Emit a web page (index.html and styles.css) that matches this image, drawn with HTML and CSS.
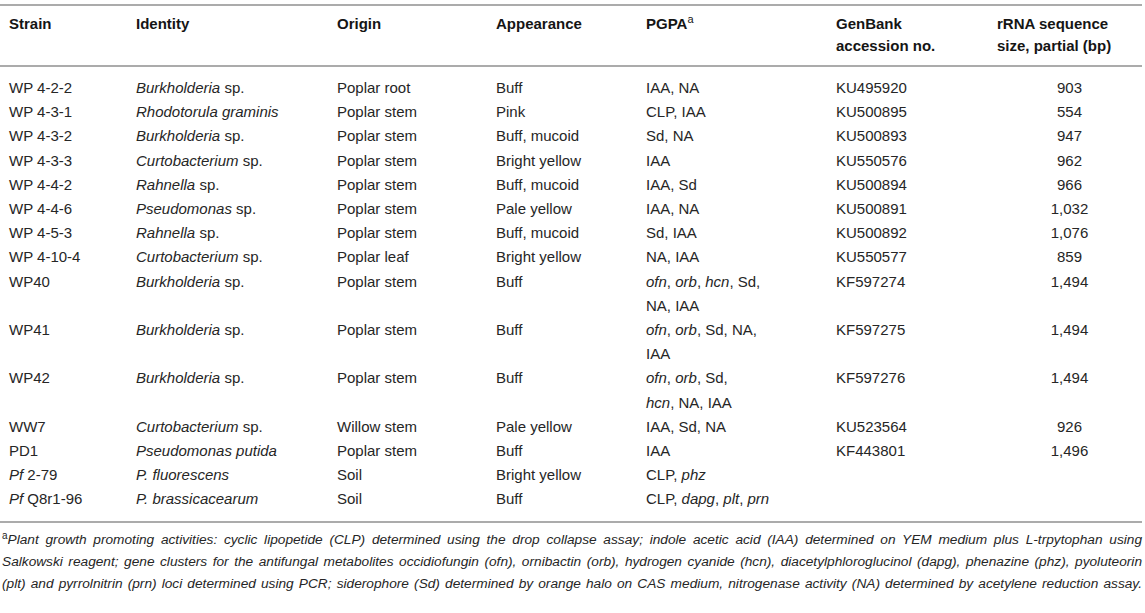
FILE: index.html
```html
<!DOCTYPE html>
<html>
<head>
<meta charset="utf-8">
<link rel="stylesheet" href="styles.css">
</head>
<body>
<div class="page">
<table class="data">
<colgroup>
<col class="c1"><col class="c2"><col class="c3"><col class="c4"><col class="c5"><col class="c6"><col class="c7">
</colgroup>
<thead>
<tr>
<th>Strain</th>
<th>Identity</th>
<th>Origin</th>
<th>Appearance</th>
<th>PGPA<sup class="sup">a</sup></th>
<th>GenBank<br>accession no.</th>
<th>rRNA sequence<br>size, partial (bp)</th>
</tr>
</thead>
<tbody>
<tr><td>WP 4-2-2</td><td><i>Burkholderia</i> sp.</td><td>Poplar root</td><td>Buff</td><td>IAA, NA</td><td>KU495920</td><td class="num">903</td></tr>
<tr><td>WP 4-3-1</td><td><i>Rhodotorula graminis</i></td><td>Poplar stem</td><td>Pink</td><td>CLP, IAA</td><td>KU500895</td><td class="num">554</td></tr>
<tr><td>WP 4-3-2</td><td><i>Burkholderia</i> sp.</td><td>Poplar stem</td><td>Buff, mucoid</td><td>Sd, NA</td><td>KU500893</td><td class="num">947</td></tr>
<tr><td>WP 4-3-3</td><td><i>Curtobacterium</i> sp.</td><td>Poplar stem</td><td>Bright yellow</td><td>IAA</td><td>KU550576</td><td class="num">962</td></tr>
<tr><td>WP 4-4-2</td><td><i>Rahnella</i> sp.</td><td>Poplar stem</td><td>Buff, mucoid</td><td>IAA, Sd</td><td>KU500894</td><td class="num">966</td></tr>
<tr><td>WP 4-4-6</td><td><i>Pseudomonas</i> sp.</td><td>Poplar stem</td><td>Pale yellow</td><td>IAA, NA</td><td>KU500891</td><td class="num">1,032</td></tr>
<tr><td>WP 4-5-3</td><td><i>Rahnella</i> sp.</td><td>Poplar stem</td><td>Buff, mucoid</td><td>Sd, IAA</td><td>KU500892</td><td class="num">1,076</td></tr>
<tr><td>WP 4-10-4</td><td><i>Curtobacterium</i> sp.</td><td>Poplar leaf</td><td>Bright yellow</td><td>NA, IAA</td><td>KU550577</td><td class="num">859</td></tr>
<tr><td>WP40</td><td><i>Burkholderia</i> sp.</td><td>Poplar stem</td><td>Buff</td><td><i>ofn</i>, <i>orb</i>, <i>hcn</i>, Sd,<br>NA, IAA</td><td>KF597274</td><td class="num">1,494</td></tr>
<tr><td>WP41</td><td><i>Burkholderia</i> sp.</td><td>Poplar stem</td><td>Buff</td><td><i>ofn</i>, <i>orb</i>, Sd, NA,<br>IAA</td><td>KF597275</td><td class="num">1,494</td></tr>
<tr><td>WP42</td><td><i>Burkholderia</i> sp.</td><td>Poplar stem</td><td>Buff</td><td><i>ofn</i>, <i>orb</i>, Sd,<br><i>hcn</i>, NA, IAA</td><td>KF597276</td><td class="num">1,494</td></tr>
<tr><td>WW7</td><td><i>Curtobacterium</i> sp.</td><td>Willow stem</td><td>Pale yellow</td><td>IAA, Sd, NA</td><td>KU523564</td><td class="num">926</td></tr>
<tr><td>PD1</td><td><i>Pseudomonas putida</i></td><td>Poplar stem</td><td>Buff</td><td>IAA</td><td>KF443801</td><td class="num">1,496</td></tr>
<tr><td><i>Pf</i> 2-79</td><td><i>P. fluorescens</i></td><td>Soil</td><td>Bright yellow</td><td>CLP, <i>phz</i></td><td></td><td class="num"></td></tr>
<tr><td><i>Pf</i> Q8r1-96</td><td><i>P. brassicacearum</i></td><td>Soil</td><td>Buff</td><td>CLP, <i>dapg</i>, <i>plt</i>, <i>prn</i></td><td></td><td class="num"></td></tr>
</tbody>
</table>
<p class="note"><sup class="fsup">a</sup>Plant growth promoting activities: cyclic lipopetide (CLP) determined using the drop collapse assay; indole acetic acid (IAA) determined on YEM medium plus L-trpytophan using<br>Salkowski reagent; gene clusters for the antifungal metabolites occidiofungin (ofn), ornibactin (orb), hydrogen cyanide (hcn), diacetylphloroglucinol (dapg), phenazine (phz), pyoluteorin<br>(plt) and pyrrolnitrin (prn) loci determined using PCR; siderophore (Sd) determined by orange halo on CAS medium, nitrogenase activity (NA) determined by acetylene reduction assay.</p>
</div>
</body>
</html>
```

FILE: styles.css
```css
html, body {
  margin: 0;
  padding: 0;
  background: #ffffff;
}

.page {
  padding: 4px 0 0 0;
  width: 1142px;
  font-family: "Liberation Sans", Arial, sans-serif;
  color: #262626;
}

.data {
  width: 1142px;
  border-collapse: collapse;
  table-layout: fixed;
  font-size: 15px;
}

.c1 { width: 127px; }
.c2 { width: 201px; }
.c3 { width: 159px; }
.c4 { width: 150px; }
.c5 { width: 190px; }
.c6 { width: 161px; }
.c7 { width: 154px; }

.data thead th {
  text-align: left;
  vertical-align: top;
  font-weight: bold;
  line-height: 22px;
  padding: 7px 0 8px 9px;
  border-top: 2px solid #ababab;
  border-bottom: 2px solid #ababab;
  color: #151515;
}

.data tbody td {
  line-height: 24.2px;
  padding: 0 0 0 9px;
  vertical-align: top;
  white-space: nowrap;
}

.data tbody tr:first-child td {
  padding-top: 9px;
}

.data tbody tr:last-child td {
  padding-bottom: 9px;
  border-bottom: 2px solid #ababab;
}

.data td.num {
  text-align: center;
}

.sup {
  font-weight: normal;
  font-size: 11px;
  vertical-align: 6px;
  line-height: 0;
}

.note {
  margin: 6px 0 0 0;
  padding: 0 0 0 2px;
  font-size: 13.7px;
  font-style: italic;
  line-height: 22px;
  text-align: justify;
  text-align-last: justify;
  color: #262626;
}

.fsup {
  font-style: normal;
  font-size: 10px;
  vertical-align: 5px;
  line-height: 0;
}
```
